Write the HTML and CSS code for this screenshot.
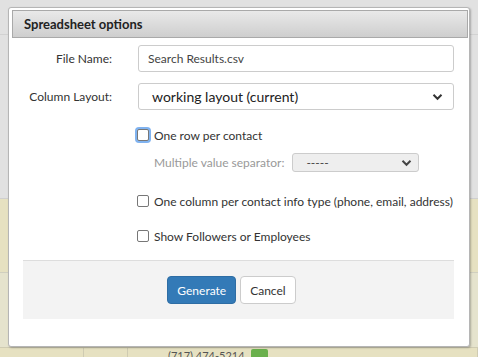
FILE: index.html
```html
<!DOCTYPE html>
<html lang="en">
<head>
    <meta charset="UTF-8">
    <title>Spreadsheet options</title>
    <link rel="stylesheet" href="styles.css">
</head>
<body>
    <div class="page">
        <div class="page-top"><div class="top-line"></div></div>
        <div class="row row-a"></div>
        <div class="row row-b"></div>
        <div class="row row-c">
            <div class="cell cell-1"></div>
            <div class="cell cell-2"></div>
            <div class="cell cell-3"><span class="phone">(717) 474-5214</span><span class="badge"></span></div>
        </div>
    </div>

    <div class="modal">
        <div class="modal-header">Spreadsheet options</div>
        <div class="modal-body">
            <div class="form-row">
                <label class="form-label" for="fileName">File Name:</label>
                <input type="text" id="fileName" class="form-control" value="Search Results.csv">
            </div>
            <div class="form-row">
                <label class="form-label" for="layout">Column Layout:</label>
                <div class="select-box">
                    <span>working layout (current)</span>
                    <svg class="chev" width="11" height="8" viewBox="0 0 11 8"><path d="M1.5 1.8 L5.5 5.8 L9.5 1.8" fill="none" stroke="#333" stroke-width="2"/></svg>
                </div>
            </div>
            <div class="checks">
                <label class="check first"><span class="box focused"></span>One row per contact</label>
                <div class="separator">
                    <span>Multiple value separator:</span>
                    <div class="small-select">
                        <span>-----</span>
                        <svg class="chev" width="11" height="8" viewBox="0 0 11 8"><path d="M1.5 1.8 L5.5 5.8 L9.5 1.8" fill="none" stroke="#444" stroke-width="2"/></svg>
                    </div>
                </div>
                <label class="check"><span class="box"></span>One column per contact info type (phone, email, address)</label>
                <label class="check last"><span class="box"></span>Show Followers or Employees</label>
            </div>
            <div class="modal-footer">
                <button class="btn btn-primary">Generate</button>
                <button class="btn btn-default">Cancel</button>
            </div>
        </div>
    </div>
</body>
</html>
```

FILE: styles.css
```css
body {
    margin: 0;
    font-family: "Lato", "Noto Sans", sans-serif;
    font-size: 12px;
    color: #333;
    width: 478px;
    height: 357px;
    overflow: hidden;
    position: relative;
}
.page-top {
    height: 164px;
    padding-top: 34px;
    background-color: #e1e1e1;
}
.top-line {
    height: 1px;
    background-color: #d2d2d2;
}
.row-a {
    height: 73px;
    background-color: #e6e1c1;
    border-top: 1px solid #cfcfcf;
}
.row-b {
    height: 74px;
    background-color: #e5e3cd;
    border-top: 1px solid #d0cfbf;
}
.row-c {
    height: 10px;
    background-color: #e6e1c1;
    border-top: 1px solid #cfcbb2;
    display: flex;
    overflow: hidden;
}
.cell {
    border-right: 1px solid #cfcbb2;
}
.cell-1 {
    width: 83px;
}
.cell-2 {
    width: 43px;
}
.cell-3 {
    flex: 1;
    padding-left: 40px;
    font-size: 11px;
    color: #555;
    line-height: 14px;
    padding-top: 1px;
}
.badge {
    display: inline-block;
    width: 17px;
    height: 14px;
    margin-left: 6px;
    background-color: #6ab04c;
    border-radius: 2px;
    vertical-align: top;
}
.modal {
    position: absolute;
    left: 8px;
    top: 7px;
    width: 456px;
    height: 336px;
    background-color: #fff;
    border: 1px solid #b5b5b5;
    border-radius: 3px;
    box-shadow: 1px 1px 2px rgba(0, 0, 0, 0.25);
    padding: 2px 1px 0 3px;
}
.modal-header {
    height: 26px;
    line-height: 26px;
    border: 1px solid #a9a9a9;
    background: linear-gradient(#e9e9e9, #cecece);
    font-weight: bold;
    font-size: 13px;
    color: #222;
    padding-left: 11px;
}
.modal-body {
    padding: 7px 10px 0 11px;
}
.form-row {
    display: flex;
    align-items: center;
    margin-bottom: 11px;
}
.form-label {
    width: 89px;
    text-align: right;
    margin-right: 26px;
    color: #333;
}
.form-control {
    width: 316px;
    height: 27px;
    box-sizing: border-box;
    border: 1px solid #ccc;
    border-radius: 3px;
    padding: 0 9px;
    font-family: inherit;
    font-size: 12px;
    color: #444;
    margin: 0;
}
.select-box {
    width: 316px;
    height: 27px;
    box-sizing: border-box;
    border: 1px solid #ccc;
    border-radius: 3px;
    padding: 0 10px 0 13px;
    display: flex;
    align-items: center;
    justify-content: space-between;
    font-size: 14px;
    color: #222;
}
.checks {
    padding-left: 114px;
    padding-top: 7px;
}
.check {
    display: flex;
    align-items: center;
    height: 14px;
    margin-bottom: 21px;
    color: #333;
}
.check.first {
    margin-bottom: 11px;
}
.check.last {
    margin-bottom: 0;
}
.box {
    width: 10px;
    height: 10px;
    border: 1px solid #777;
    border-radius: 2px;
    margin-right: 5px;
    background-color: #fff;
}
.box.focused {
    box-shadow: 0 0 0 2px #80b3f0;
}
.separator {
    display: flex;
    align-items: center;
    padding-left: 17px;
    color: #999;
    margin-bottom: 22px;
}
.small-select {
    width: 127px;
    height: 19px;
    box-sizing: border-box;
    margin-left: 8px;
    border: 1px solid #ccc;
    border-radius: 3px;
    background-color: #eee;
    display: flex;
    align-items: center;
    justify-content: space-between;
    padding: 0 6px 0 13px;
    color: #444;
}
.modal-footer {
    margin-top: 17px;
    height: 59px;
    background-color: #f3f3f3;
    border-top: 1px solid #ddd;
    display: flex;
    align-items: center;
    justify-content: center;
    gap: 4px;
    width: 431px;
    padding-right: 14px;
    box-sizing: border-box;
}
.btn {
    height: 28px;
    border-radius: 4px;
    font-family: inherit;
    font-size: 12px;
    padding: 0 9px;
    margin: 0;
    cursor: pointer;
}
.btn-primary {
    background-color: #337ab7;
    border: 1px solid #2e6da4;
    color: #fff;
}
.btn-default {
    background-color: #fff;
    border: 1px solid #ccc;
    color: #333;
}
```
